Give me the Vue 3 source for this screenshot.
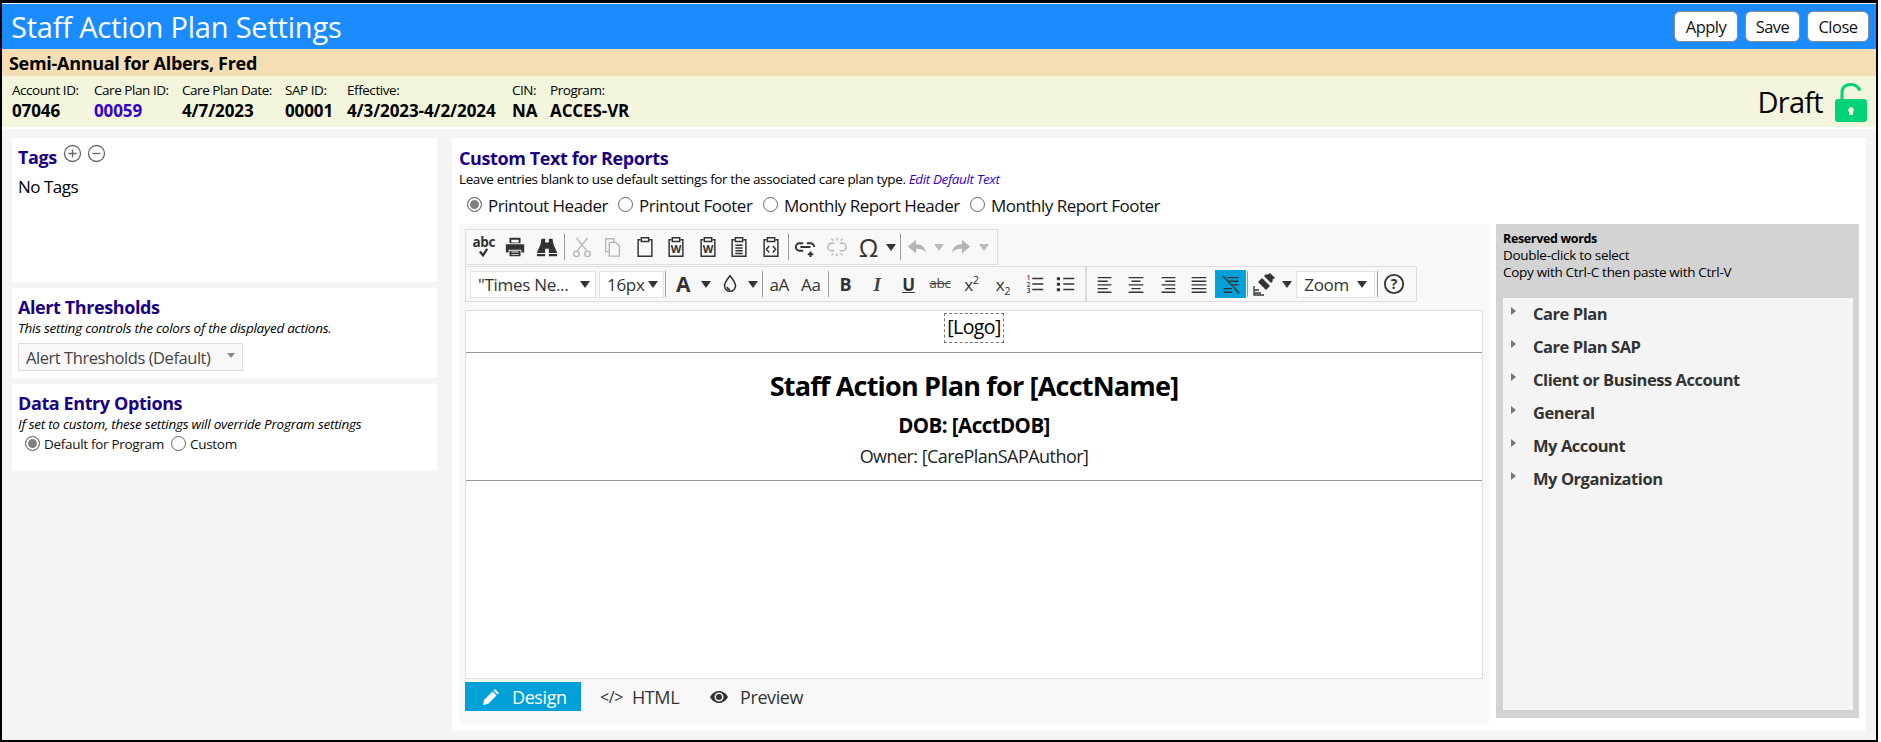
<script setup>
import { ref } from "vue";

const infoItems = [
  { label: "Account ID:", value: "07046", width: 82 },
  { label: "Care Plan ID:", value: "00059", width: 88, link: true },
  { label: "Care Plan Date:", value: "4/7/2023", width: 103 },
  { label: "SAP ID:", value: "00001", width: 62 },
  { label: "Effective:", value: "4/3/2023-4/2/2024", width: 165 },
  { label: "CIN:", value: "NA", width: 38 },
  { label: "Program:", value: "ACCES-VR", width: 120 },
];

const reportTabs = [
  { label: "Printout Header", width: 151 },
  { label: "Printout Footer", width: 145 },
  { label: "Monthly Report Header", width: 207 },
  { label: "Monthly Report Footer", width: 200 },
];
const selectedTab = ref("Printout Header");
const entryMode = ref("Default for Program");

const clip = "M7 4H4.500v18h15V4H17M8 2h8v4H8z";
const rowOne = [
  { key: "spell", word: "abc", d: "M4 10l7 8 9-14", sw: 5 },
  { key: "print", fill: "M6 2h12v6H6zM2 9h20v9h-3v-3H5v3H2zM6 16h12v6H6z", hole: "M8 4h8v3H8zM8 17h8v1H8zM8 19.500h8v1H8z" },
  { key: "find", fill: "M6 3h4v4h4V3h4l1 6 4 9v4h-9v-8h-4v8H1v-4l4-9z", hole: "M1 18.500h9v1H1zM14 18.500h9v1h-9z" },
  { type: "sep" },
  { key: "cut", off: true, d: "M6 2l11 14M18 2L7 16M9 19.500a3 3 0 1 1-6 0a3 3 0 1 1 6 0zM21 19.500a3 3 0 1 1-6 0a3 3 0 1 1 6 0z", sw: 1.500 },
  { key: "copy", off: true, d: "M4 3h9v3M4 3v14h4M8 7h7l4 4v11H8z", sw: 1.500 },
  { key: "paste", d: clip, sw: 1.600 },
  { key: "pasteWord", d: clip, sw: 1.600, mark: "W" },
  { key: "pasteDoc", d: clip, sw: 1.600, mark: "W" },
  { key: "pasteText", d: clip + "M8 10h8M8 13h8M8 16h8M8 19h8", sw: 1.600 },
  { key: "pasteHtml", d: clip + "M10 11l-3 3.500 3 3.500M14 11l3 3.500-3 3.500", sw: 1.600 },
  { type: "sep" },
  { key: "link", d: "M10 8H6a4 4 0 0 0 0 8h4M14 8h4a4 4 0 0 1 4 4M7 12h11M18 17v6M15 20h6", sw: 2.200 },
  { key: "unlink", off: true, d: "M9 8H6a4 4 0 0 0 0 8h3M15 8h3a4 4 0 0 1 0 8h-3M12 2v3M12 19v3M6 3l2 2M18 3l-2 2M6 21l2-2M18 21l-2-2", sw: 1.600 },
  { key: "omega", word: "Ω", big: true },
  { type: "caret" },
  { type: "sep", wide: true },
  { key: "undo", off: true, fill: "M11 4v5c6 0 10 3 11 10-2-4-6-5-11-5v5L2 11.500z" },
  { type: "caret", off: true },
  { key: "redo", off: true, fill: "M13 4v5C7 9 3 12 2 19c2-4 6-5 11-5v5l9-7.500z" },
  { type: "caret", off: true },
];

const rowTwoA = [
  { type: "sep" },
  { key: "fore", word: "A", bold: true, big: true },
  { type: "caret" },
  { key: "back", d: "M12 3c4 5 6 8 6 11a6 6 0 0 1-12 0c0-3 2-6 6-11zM9 15a3 3 0 0 0 3 3", sw: 1.700 },
  { type: "caret" },
  { type: "sep" },
  { key: "lower", word: "aA" },
  { key: "upper", word: "Aa" },
  { type: "sep" },
  { key: "bold", word: "B", bold: true },
  { key: "italic", word: "I", italic: true },
  { key: "under", word: "U", under: true },
  { key: "strike", word: "abc", strike: true },
  { key: "sup", word: "x", sup: "2" },
  { key: "sub", word: "x", sub: "2" },
  { key: "ol", d: "M9 6h12M9 12h12M9 18h12", sw: 1.600, digits: true },
  { key: "ul", d: "M9 6h12M9 12h12M9 18h12", sw: 1.600, fill: "M2 4.500h3.500v3.500H2zM2 10.500h3.500V14H2zM2 16.500h3.500V20H2z" },
];

const aligns = [
  { key: "left", d: "M4 5h15M4 9h11M4 13h15M4 17h11M4 21h15" },
  { key: "center", d: "M4 5h16M7 9h10M4 13h16M7 17h10M4 21h16" },
  { key: "right", d: "M5 5h15M9 9h11M5 13h15M9 17h11M5 21h15" },
  { key: "justify", d: "M4 5h16M4 9h16M4 13h16M4 17h16M4 21h16" },
  { key: "noWrap", d: "M8 5h12M10 9h10M12 13h8M4 17h9M4 21h9M3 3l18 19", active: true },
];

const wordGroups = ["Care Plan", "Care Plan SAP", "Client or Business Account", "General", "My Account", "My Organization"];
</script>

<template>
  <div class="frame">
    <header class="topbar">
      <h1 class="page-title">Staff Action Plan Settings</h1>
      <div class="actions">
        <button class="btn apply">Apply</button>
        <button class="btn save">Save</button>
        <button class="btn close">Close</button>
      </div>
    </header>

    <div class="plan-name">Semi-Annual for Albers, Fred</div>

    <div class="info-bar">
      <div v-for="item in infoItems" :key="item.label" class="info-item" :style="{ width: item.width + 'px' }">
        <span class="info-label">{{ item.label }}</span>
        <span class="info-value" :class="{ link: item.link }">{{ item.value }}</span>
      </div>
      <div class="status">
        <span>Draft</span>
        <svg width="34" height="40" viewBox="0 0 34 40">
          <path d="M8 18V11C8 5 12 2.500 17 2.500c4 0 7 2 9 6" fill="none" stroke="#00d27a" stroke-width="3" />
          <path fill="#00d27a" fill-rule="evenodd" d="M4 17h26a3 3 0 0 1 3 3v17a3 3 0 0 1-3 3H4a3 3 0 0 1-3-3V20a3 3 0 0 1 3-3zM17 25a3 3 0 0 0-2 5v3h4v-3a3 3 0 0 0-2-5z" />
        </svg>
      </div>
    </div>

    <main class="content">
      <aside class="side">
        <section class="card tags-card">
          <h2 class="heading">
            Tags
            <svg class="round-icon" width="19" height="19" viewBox="0 0 19 19"><circle cx="9.500" cy="9.500" r="8" /><path d="M5.500 9.500h8M9.500 5.500v8" /></svg>
            <svg class="round-icon" width="19" height="19" viewBox="0 0 19 19"><circle cx="9.500" cy="9.500" r="8" /><path d="M5.500 9.500h8" /></svg>
          </h2>
          <p class="no-tags">No Tags</p>
        </section>

        <section class="card alert-card">
          <h2 class="heading">Alert Thresholds</h2>
          <p class="hint">This setting controls the colors of the displayed actions.</p>
          <div class="fake-select">
            <span>Alert Thresholds (Default)</span>
            <i class="caret small"></i>
          </div>
        </section>

        <section class="card entry-card">
          <h2 class="heading">Data Entry Options</h2>
          <p class="hint">If set to custom, these settings will override Program settings</p>
          <div class="entry-radios">
            <label v-for="opt in ['Default for Program', 'Custom']" :key="opt" class="radio small-radio">
              <input v-model="entryMode" type="radio" :value="opt" />
              <span>{{ opt }}</span>
            </label>
          </div>
        </section>
      </aside>

      <section class="card report-card">
        <h2 class="heading">Custom Text for Reports</h2>
        <p class="intro">
          Leave entries blank to use default settings for the associated care plan type.
          <a class="edit-link">Edit Default Text</a>
        </p>
        <div class="report-radios">
          <label v-for="tab in reportTabs" :key="tab.label" class="radio" :style="{ width: tab.width + 'px' }">
            <input v-model="selectedTab" type="radio" :value="tab.label" />
            <span>{{ tab.label }}</span>
          </label>
        </div>

        <div class="workspace">
          <div class="editor-pane">
            <div class="toolbar row-one">
              <template v-for="(tool, i) in rowOne" :key="i">
                <span v-if="tool.type === 'sep'" class="sep" :class="{ wide: tool.wide }"></span>
                <span v-else-if="tool.type === 'caret'" class="caret-cell"><i class="caret" :class="{ off: tool.off }"></i></span>
                <span v-else class="tool" :class="{ off: tool.off }">
                  <span v-if="tool.word" class="tool-word" :class="{ big: tool.big, spell: tool.d }">{{ tool.word }}</span>
                  <svg v-if="tool.d || tool.fill" :class="{ under: tool.word }" :width="tool.word ? 15 : 22" :height="tool.word ? 11 : 22" viewBox="0 0 24 24">
                    <path v-if="tool.fill" :d="tool.fill" class="solid" />
                    <path v-if="tool.hole" :d="tool.hole" fill="#f8f8f8" />
                    <path v-if="tool.d" :d="tool.d" class="line" :stroke-width="tool.sw" />
                    <text v-if="tool.mark" x="12" y="18" text-anchor="middle" class="mark">{{ tool.mark }}</text>
                  </svg>
                </span>
              </template>
            </div>

            <div class="toolbar row-two">
              <div class="tool-select font-select"><span>"Times Ne...</span><i class="caret"></i></div>
              <div class="tool-select size-select"><span>16px</span><i class="caret"></i></div>
              <template v-for="(tool, i) in rowTwoA" :key="i">
                <span v-if="tool.type === 'sep'" class="sep"></span>
                <span v-else-if="tool.type === 'caret'" class="caret-cell wider"><i class="caret"></i></span>
                <span v-else class="tool">
                  <span v-if="tool.word" class="tool-word" :class="{ big: tool.big, bold: tool.bold, italic: tool.italic, under: tool.under, strike: tool.strike }">{{ tool.word }}<sup v-if="tool.sup">{{ tool.sup }}</sup><sub v-if="tool.sub">{{ tool.sub }}</sub></span>
                  <svg v-else width="22" height="22" viewBox="0 0 24 24">
                    <path v-if="tool.fill" :d="tool.fill" class="solid" />
                    <path :d="tool.d" class="line" :stroke-width="tool.sw" />
                    <g v-if="tool.digits" class="digits">
                      <text x="3" y="8">1</text><text x="3" y="15">2</text><text x="3" y="22">3</text>
                    </g>
                  </svg>
                </span>
              </template>
              <span class="group-line"></span>
              <span v-for="tool in aligns" :key="tool.key" class="tool" :class="{ active: tool.active }">
                <svg width="22" height="22" viewBox="0 0 24 24"><path :d="tool.d" class="line" stroke-width="1.500" /></svg>
              </span>
              <span class="sep tight"></span>
              <span class="tool brush">
                <svg width="24" height="24" viewBox="0 0 24 24">
                  <path class="solid" d="M18 1l5 5-3 2 1 1-2 2-7-7 2-2 1 1zM10 6l8 8-4 4-8-8z" />
                  <path class="line" stroke-width="1.300" d="M2 14v9h10M2 18h5M2 21h7" />
                </svg>
              </span>
              <span class="caret-cell wider"><i class="caret"></i></span>
              <div class="tool-select zoom-select"><span>Zoom</span><i class="caret"></i></div>
              <span class="sep"></span>
              <span class="tool help">
                <svg width="22" height="22" viewBox="0 0 24 24">
                  <circle cx="12" cy="12" r="10" class="line" stroke-width="2" />
                  <text x="12" y="17.500" text-anchor="middle" class="help-mark">?</text>
                </svg>
              </span>
            </div>

            <div class="document">
              <div class="doc-logo-row"><span class="doc-logo">[Logo]</span></div>
              <hr class="doc-rule" />
              <div class="doc-title">Staff Action Plan for [AcctName]</div>
              <div class="doc-dob">DOB: [AcctDOB]</div>
              <div class="doc-owner">Owner: [CarePlanSAPAuthor]</div>
              <hr class="doc-rule lower" />
            </div>

            <div class="mode-tabs">
              <span class="mode active">
                <svg width="18" height="18" viewBox="0 0 18 18"><path fill="currentColor" d="M13 1l4 4-1.500 1.500-4-4zM10.500 3.500l4 4L6 16l-5 1 1-5z" /></svg>
                Design
              </span>
              <span class="mode html"><span class="code-mark">&lt;/&gt;</span>HTML</span>
              <span class="mode preview">
                <svg width="18" height="12" viewBox="0 0 18 12"><path fill="#333" fill-rule="evenodd" d="M0 6c2-3.500 5-6 9-6s7 2.500 9 6c-2 3.500-5 6-9 6s-7-2.500-9-6zM9 1.500a4.500 4.500 0 1 0 0 9 4.500 4.500 0 0 0 0-9z" /><circle cx="9" cy="6" r="3" fill="#333" /></svg>
                Preview
              </span>
            </div>
          </div>

          <aside class="words-pane">
            <div class="words-help">
              <strong>Reserved words</strong>
              <div>Double-click to select</div>
              <div>Copy with Ctrl-C then paste with Ctrl-V</div>
            </div>
            <ul class="word-tree">
              <li v-for="group in wordGroups" :key="group"><i class="tree-arrow"></i>{{ group }}</li>
            </ul>
          </aside>
        </div>
      </section>
    </main>
  </div>
</template>

<style>
html, body {
  margin: 0;
  background: #fff;
}
</style>

<style scoped>
.frame {
  box-sizing: border-box;
  width: 1878px;
  height: 742px;
  border: 2px solid #000;
  border-top-width: 3px;
  padding-top: 1px;
  background: #f4f4f4;
  display: flex;
  flex-direction: column;
  font-family: "Open Sans", "Noto Sans", sans-serif;
  color: #000;
  overflow: hidden;
}

.topbar {
  height: 45px;
  flex: none;
  background: #1a8cff;
  display: flex;
  align-items: center;
  justify-content: space-between;
  padding: 0 7px 0 9px;
}

.page-title {
  margin: 0;
  font-size: 29px;
  font-weight: 400;
  letter-spacing: -0.2px;
  color: #fff;
}

.actions {
  display: flex;
  gap: 7px;
}

.btn {
  height: 31px;
  padding: 0;
  background: #fff;
  border: 1px solid #8a8a8a;
  border-radius: 6px;
  font: 400 16.500px "Open Sans", sans-serif;
  letter-spacing: -0.5px;
  color: #111;
}
.apply { width: 64px; }
.save { width: 55px; }
.close { width: 62px; }

.plan-name {
  height: 27px;
  flex: none;
  background: #f5deb3;
  padding-left: 7px;
  font-size: 18px;
  font-weight: 700;
  line-height: 29px;
  letter-spacing: -0.3px;
}

.info-bar {
  height: 51px;
  flex: none;
  background: #f3f5dd;
  display: flex;
  padding-left: 10px;
  position: relative;
}

.info-item {
  display: flex;
  flex-direction: column;
  flex: none;
  padding-top: 5px;
}

.info-label {
  font-size: 13.500px;
  line-height: 18px;
  letter-spacing: -0.45px;
  white-space: nowrap;
}

.info-value {
  font-size: 17px;
  font-weight: 700;
  line-height: 23px;
  letter-spacing: -0.1px;
  white-space: nowrap;
}
.info-value.link { color: #3300cc; }

.status {
  margin-left: auto;
  margin-right: 8px;
  display: flex;
  align-items: center;
  gap: 11px;
  font-size: 29px;
  letter-spacing: -0.7px;
}

.content {
  flex: 1;
  min-height: 0;
  border-top: 2px solid #fff;
  padding: 9px 10px 9px 10px;
  display: flex;
  gap: 15px;
}

.side {
  width: 425px;
  flex: none;
  display: flex;
  flex-direction: column;
  gap: 6px;
}

.card {
  background: #fff;
  box-sizing: border-box;
  padding: 7px 6px 5px;
}

.tags-card { height: 144px; }
.alert-card { height: 90px; }
.entry-card { height: 87px; }

.heading {
  margin: 0;
  font-size: 18px;
  font-weight: 700;
  line-height: 24px;
  letter-spacing: -0.4px;
  color: #1a0082;
  display: flex;
  align-items: flex-start;
  gap: 5px;
}

.round-icon {
  fill: none;
  stroke: #666;
  stroke-width: 1.300;
  margin-top: -1px;
}
.round-icon:first-of-type { margin-left: 1px; }

.no-tags {
  margin: 6px 0 0;
  font-size: 17px;
  letter-spacing: -0.5px;
}

.hint {
  margin: 0;
  font-size: 13.500px;
  font-style: italic;
  line-height: 18px;
  letter-spacing: -0.25px;
}

.fake-select {
  box-sizing: border-box;
  width: 225px;
  height: 28px;
  margin-top: 6px;
  background: #f8f8f8;
  border: 1px solid #ddd;
  padding: 0 7px;
  display: flex;
  align-items: center;
  justify-content: space-between;
  font-size: 16.500px;
  letter-spacing: -0.45px;
  color: #444;
}

.caret {
  display: block;
  width: 0;
  height: 0;
  border-left: 5px solid transparent;
  border-right: 5px solid transparent;
  border-top: 7px solid #333;
}
.caret.off { border-top-color: #bbb; }
.caret.small {
  border-left-width: 4.500px;
  border-right-width: 4.500px;
  border-top-width: 5px;
  border-top-color: #888;
  margin-bottom: 4px;
}

.entry-radios {
  display: flex;
  gap: 7px;
  padding-left: 7px;
  margin-top: 2px;
}

.radio {
  display: flex;
  align-items: center;
  gap: 6px;
  flex: none;
  white-space: nowrap;
  font-size: 17px;
  letter-spacing: -0.5px;
  color: #111;
}

.radio input {
  appearance: none;
  box-sizing: border-box;
  width: 15px;
  height: 15px;
  margin: 0 0 2px;
  border: 1px solid #666;
  border-radius: 50%;
  background: #fff;
  flex: none;
}
.radio input:checked {
  background: #808080;
  box-shadow: inset 0 0 0 2px #fff;
}

.small-radio {
  font-size: 13.500px;
  letter-spacing: -0.3px;
  gap: 4px;
}

.report-card {
  flex: 1;
  min-width: 0;
  padding: 8px 7px 7px 7px;
  display: flex;
  flex-direction: column;
}

.intro {
  margin: 0;
  font-size: 13.500px;
  line-height: 18px;
  letter-spacing: -0.38px;
}

.edit-link {
  font-style: italic;
  color: #3300cc;
}

.report-radios {
  display: flex;
  padding: 6px 0 0 8px;
  height: 36px;
  box-sizing: border-box;
  align-items: flex-start;
  flex: none;
}

.workspace {
  display: flex;
  gap: 7px;
  height: 500px;
  align-items: flex-start;
}

.editor-pane {
  box-sizing: border-box;
  width: 1030px;
  height: 500px;
  background: #f8f8f8;
  padding: 5px 6px 0;
  display: flex;
  flex-direction: column;
}

.toolbar {
  box-sizing: border-box;
  display: flex;
  align-items: center;
  flex: none;
  border: 1px solid #ddd;
}

.row-one {
  width: 533px;
  height: 36px;
  padding-left: 2px;
}

.row-two {
  width: 952px;
  height: 36px;
  margin-top: 1px;
  padding-left: 4px;
}

.tool {
  width: 31.500px;
  height: 28px;
  flex: none;
  display: flex;
  flex-direction: column;
  align-items: center;
  justify-content: center;
  color: #333;
}
.tool.active {
  background: #00a0d9;
}
.tool.off {
  --ink: #b5b5b5;
}

.solid { fill: var(--ink, #333); }
.line {
  fill: none;
  stroke: var(--ink, #333);
}
.mark {
  font: 700 12px "Open Sans", sans-serif;
  fill: #333;
}
.digits text {
  font: 600 7px "Open Sans", sans-serif;
  fill: #333;
}
.help-mark {
  font: 700 15px "Open Sans", sans-serif;
  fill: #333;
}

.tool-word {
  font-size: 17px;
  line-height: 1;
  letter-spacing: -0.3px;
}
.tool-word.big { font-size: 25px; font-weight: 500; }
.tool-word.spell { font-size: 13.500px; font-weight: 700; margin-bottom: -1px; line-height: 13px; }
.tool-word.bold { font-weight: 700; font-size: 18px; }
.tool-word.big.bold { font-size: 21px; }
.tool-word.italic { font-style: italic; font-family: "Liberation Serif", serif; font-size: 19px; font-weight: 700; color: #444; }
.tool-word.under { text-decoration: underline; font-weight: 700; font-size: 17px; }
.tool-word.strike { text-decoration: line-through; font-size: 13.500px; color: #444; }
.tool-word sup, .tool-word sub { font-size: 11px; line-height: 0; }

svg.under { margin-top: -1px; }

.sep {
  width: 1px;
  height: 26px;
  flex: none;
  background: #999;
  margin: 0 1px 0 1.250px;
}
.sep.wide { margin: 0 0 0 3px; }
.sep.tight { margin: 0 0 0 1px; }

.caret-cell {
  width: 13px;
  flex: none;
  display: flex;
  justify-content: center;
}
.caret-cell.wider { width: 15px; }

.tool-select {
  box-sizing: border-box;
  height: 27px;
  flex: none;
  background: #fff;
  border: 1px solid #e2e2e2;
  display: flex;
  align-items: center;
  justify-content: space-between;
  font-size: 17px;
  letter-spacing: -0.3px;
  color: #333;
}
.font-select { width: 126px; padding: 0 5px 0 7px; margin-right: 3px; }
.size-select { width: 65px; padding: 0 5px 0 7px; }
.zoom-select { width: 79px; padding: 0 7px; margin-left: 2px; }

.group-line {
  width: 2px;
  height: 34px;
  flex: none;
  margin: 0 2px 0 3px;
  background: #ddd;
}

.brush { width: 31px; }

.document {
  box-sizing: border-box;
  flex: none;
  width: 1018px;
  height: 369px;
  margin-top: 8px;
  background: #fff;
  border: 1px solid #ddd;
  text-align: center;
}

.doc-logo-row {
  height: 34px;
  padding-top: 2px;
}

.doc-logo {
  display: inline-block;
  box-sizing: border-box;
  height: 30px;
  width: 60px;
  border: 1px dashed #777;
  font-size: 19.500px;
  line-height: 26px;
  letter-spacing: -0.6px;
  white-space: nowrap;
}

.doc-rule {
  margin: 5px 0 0;
  border: 0;
  height: 1px;
  background: #999;
}
.doc-rule.lower { margin-top: 12px; }

.doc-title {
  margin-top: 15px;
  font-size: 27px;
  font-weight: 700;
  line-height: 36px;
  letter-spacing: -0.8px;
}

.doc-dob {
  margin-top: 8px;
  font-size: 20.500px;
  font-weight: 700;
  line-height: 26px;
  letter-spacing: -0.55px;
}

.doc-owner {
  margin-top: 6px;
  font-size: 18px;
  line-height: 24px;
  letter-spacing: -0.55px;
  color: #222;
}

.mode-tabs {
  display: flex;
  margin-top: 3px;
  height: 29px;
}

.mode {
  display: flex;
  align-items: center;
  font-size: 18px;
  letter-spacing: -0.4px;
  color: #333;
  flex: none;
}
.mode.active {
  width: 116px;
  box-sizing: border-box;
  padding-left: 17px;
  gap: 12px;
  background: #00a0d9;
  color: #fff;
}
.mode.html {
  width: 126px;
  padding-left: 19px;
  box-sizing: border-box;
  gap: 9px;
}
.code-mark { font-size: 16px; }
.mode.preview { padding-left: 3px; gap: 12px; }

.words-pane {
  box-sizing: border-box;
  width: 363px;
  height: 494px;
  background: #d3d3d3;
  padding: 6px 6px 8px 7px;
  display: flex;
  flex-direction: column;
}

.words-help {
  height: 68px;
  flex: none;
  font-size: 13.500px;
  line-height: 17px;
  letter-spacing: -0.3px;
}
.words-help strong { font-size: 12.500px; letter-spacing: -0.35px; }

.word-tree {
  list-style: none;
  margin: 0;
  padding: 0;
  flex: 1;
  background: #f4f4f4;
}

.word-tree li {
  position: relative;
  height: 33px;
  padding-left: 30px;
  font-size: 16.500px;
  font-weight: 700;
  line-height: 31px;
  letter-spacing: -0.45px;
  color: #333;
}

.tree-arrow {
  position: absolute;
  left: 8px;
  top: 9px;
  width: 0;
  height: 0;
  border-top: 4.500px solid transparent;
  border-bottom: 4.500px solid transparent;
  border-left: 5px solid #777;
}
</style>
